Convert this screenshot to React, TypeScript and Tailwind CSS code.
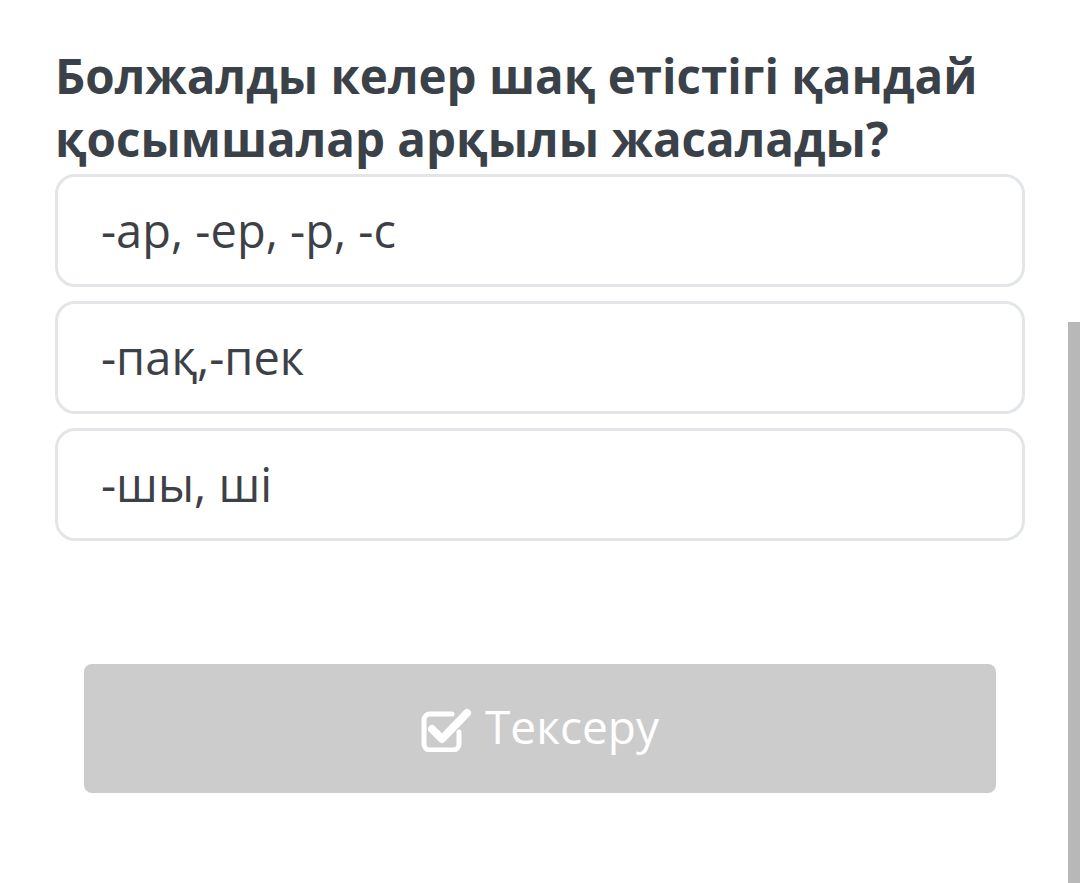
export default function App() {
  const options = ['-ар, -ер, -р, -с', '-пақ,-пек', '-шы, ші'];

  return (
    <div className="relative min-h-[883px] w-[1080px] overflow-hidden bg-white" style={{ fontFamily: '"Open Sans", "Noto Sans", sans-serif' }}>
      <div className="pl-[55px] pr-[55px] pt-[44px]">
        {/* Question */}
        <h1 className="text-[47.5px] font-bold leading-[63px] text-[#3b4148]">
          Болжалды келер шақ етістігі қандай қосымшалар арқылы жасалады?
        </h1>

        {/* Options */}
        <div className="mt-[4px] flex flex-col gap-[14px]">
          {options.map((opt, i) => (
            <div
              key={i}
              className="flex h-[113px] items-center rounded-[20px] border-[3px] border-[#e3e6e8] pl-[43px] text-[47px] text-[#3d4147]"
            >
              {opt}
            </div>
          ))}
        </div>

        {/* Check button */}
        <div className="mt-[123px] px-[29px]">
          <button className="flex h-[129px] w-full items-center justify-center gap-[12px] rounded-[8px] bg-[#cccccc] text-[46px] text-white">
            <svg width="52" height="46" viewBox="0 0 52 46" fill="none">
              <path
                d="M38 26v12a6 6 0 0 1-6 6H9a6 6 0 0 1-6-6V14a6 6 0 0 1 6-6h22"
                stroke="white"
                strokeWidth="5"
                strokeLinecap="round"
              />
              <path d="M11 23l10 10L46 7" stroke="white" strokeWidth="8" strokeLinecap="round" strokeLinejoin="round" />
            </svg>
            <span className="pb-[4px]">Тексеру</span>
          </button>
        </div>
      </div>

      {/* scrollbar */}
      <div className="absolute right-0 top-[322px] h-[561px] w-[12px] bg-[#b8b8b8]" />
    </div>
  );
}
